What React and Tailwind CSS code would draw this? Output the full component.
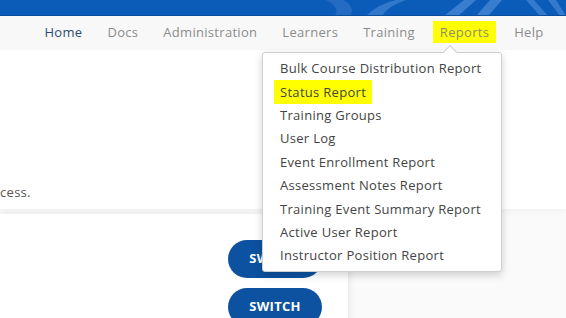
import React from 'react';

const navItems = ['Home', 'Docs', 'Administration', 'Learners', 'Training', 'Reports', 'Help'];

const reportItems = [
  'Bulk Course Distribution Report',
  'Status Report',
  'Training Groups',
  'User Log',
  'Event Enrollment Report',
  'Assessment Notes Report',
  'Training Event Summary Report',
  'Active User Report',
  'Instructor Position Report',
];

const Banner = () => (
  <div className="relative h-[16px] bg-[#0b5cb8] border-b border-[#0a4f9c] overflow-hidden">
    <svg className="absolute right-0 top-0" width="240" height="16" viewBox="0 0 240 16">
      <path d="M0 0 L18 0 Q30 8 24 16 L8 16 Q16 8 0 0 Z" fill="#2f74c8" opacity="0.7" />
      <path d="M40 16 Q52 4 70 0 L80 0 Q62 6 56 16 Z" fill="#3b7fd0" opacity="0.8" />
      <path d="M118 16 L138 0 L150 0 L132 16 Z" fill="#4586d4" opacity="0.8" />
      <path d="M150 16 L164 0 L176 0 L162 16 Z" fill="#4586d4" opacity="0.8" />
      <path d="M200 0 L214 16 L222 16 L208 0 Z" fill="#4586d4" opacity="0.7" />
      <path d="M222 0 L234 16 L240 16 L230 0 Z" fill="#4586d4" opacity="0.7" />
    </svg>
  </div>
);

const NavBar = () => (
  <nav className="h-[34px] bg-[#f8f8f8] flex items-center justify-end pr-[10px] pb-[2px]">
    {navItems.map((item) => (
      <span
        key={item}
        className={
          'px-[7px] mx-[5.5px] leading-[22px] text-[13px] tracking-[0.3px] ' +
          (item === 'Home'
            ? 'text-[#2c4d73]'
            : item === 'Reports'
            ? 'bg-[#ffff00] text-[#8f8f63]'
            : 'text-[#8c8c8c]')
        }
      >
        {item}
      </span>
    ))}
  </nav>
);

const ReportsMenu = () => (
  <div className="absolute left-[262px] top-[52px] w-[240px] bg-white border border-[#cfcfcf] rounded-[3px] shadow-[0_3px_8px_rgba(0,0,0,0.18)] pt-[3.5px] pb-[4px]">
    <div className="absolute -top-[6px] left-[182px] w-[10px] h-[10px] bg-white border-l border-t border-[#cfcfcf] rotate-45" />
    <ul className="relative">
      {reportItems.map((item) => (
        <li key={item} className="h-[23.4px] flex items-center pl-[11px]">
          <span
            className={
              'px-[6px] text-[13px] tracking-[0.3px] text-[#444] ' +
              (item === 'Status Report' ? 'bg-[#ffff00] leading-[24px]' : 'leading-[20px]')
            }
          >
            {item}
          </span>
        </li>
      ))}
    </ul>
  </div>
);

const SwitchButton = () => (
  <button className="w-[94px] h-[38px] rounded-full bg-[#0d52a0] text-white text-[13px] font-bold tracking-[0.3px]">
    SWITCH
  </button>
);

export default function App() {
  return (
    <div
      className="relative w-[566px] h-[318px] overflow-hidden bg-[#fafafa] text-[#444]"
      style={{ fontFamily: '"Open Sans", "Liberation Sans", sans-serif' }}
    >
      <Banner />
      <NavBar />

      <section className="bg-white h-[159px] flex flex-col justify-end pb-[8px] shadow-[0_3px_6px_rgba(0,0,0,0.03)]">
        <p className="text-[13px] tracking-[0.3px] text-[#555] leading-[18px]">cess.</p>
      </section>

      <div className="mt-[4px] w-[348px] h-[120px] bg-white border-t border-[#f0f0f0] shadow-[2px_0_6px_rgba(0,0,0,0.07)] flex flex-col items-end gap-[10px] pt-[26px] pr-[26px]">
        <SwitchButton />
        <SwitchButton />
      </div>

      <ReportsMenu />
    </div>
  );
}
